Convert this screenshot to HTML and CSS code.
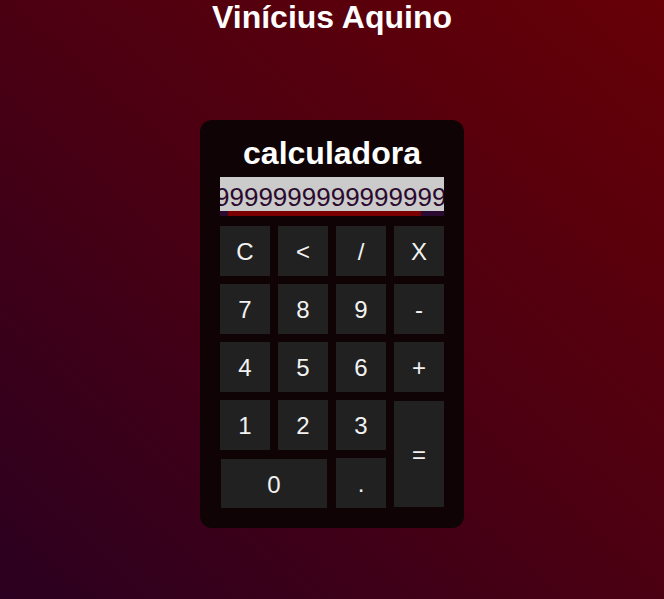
FILE: index.html
```html
<!DOCTYPE html>
<html lang="pt-br">
<head>
<meta charset="utf-8">
<title>Calculadora</title>
<link rel="stylesheet" href="styles.css">
</head>
<body>
<h1 class="author">Vinícius Aquino</h1>
<main class="calc">
  <h2 class="calc-title">calculadora</h2>
  <div class="display">
    <div class="display-text"><span class="digits">99999999999999999999</span></div>
    <div class="scroll-track"><div class="scroll-thumb"></div></div>
  </div>
  <div class="keys">
    <button class="key">C</button>
    <button class="key">&lt;</button>
    <button class="key">/</button>
    <button class="key">X</button>
    <button class="key">7</button>
    <button class="key">8</button>
    <button class="key">9</button>
    <button class="key">-</button>
    <button class="key">4</button>
    <button class="key">5</button>
    <button class="key">6</button>
    <button class="key">+</button>
    <button class="key">1</button>
    <button class="key">2</button>
    <button class="key">3</button>
    <button class="key key-equals">=</button>
    <button class="key key-zero">0</button>
    <button class="key key-dot">.</button>
  </div>
</main>
</body>
</html>
```
FILE: styles.css
```css
html, body {
  margin: 0;
  height: 100%;
}
body {
  background: linear-gradient(to top right, #2b0020 0%, #4b0012 50%, #660006 100%);
  font-family: "Liberation Sans", Arial, sans-serif;
  color: #ffffff;
  overflow: hidden;
}
.author {
  margin: 0;
  font-size: 32px;
  line-height: 34px;
  font-weight: bold;
  text-align: center;
}
.calc {
  width: 224px;
  margin: 86px auto 0;
  padding: 15px 20px 20px;
  background: #0f0305;
  border-radius: 12px;
}
.calc-title {
  margin: 0;
  font-size: 32px;
  line-height: 37px;
  font-weight: bold;
  text-align: center;
}
.display {
  margin-top: 5px;
  width: 224px;
  background: #cbcbcb;
}
.display-text {
  height: 34px;
  overflow: hidden;
  white-space: nowrap;
  font-size: 26px;
  line-height: 31px;
  padding-top: 5px;
  box-sizing: border-box;
  color: #2c0a2e;
}
.digits {
  display: inline-block;
  margin-left: -5px;
}
.scroll-track {
  height: 5px;
  background: #2a0a30;
  display: flex;
}
.scroll-thumb {
  margin-left: 8px;
  width: 193px;
  background: #7a0000;
}
.keys {
  margin-top: 10px;
  display: grid;
  grid-template-columns: repeat(4, 50px);
  grid-auto-rows: 50px;
  gap: 8px;
}
.key {
  margin: 0;
  padding: 2px 0 0;
  border: none;
  background: #212121;
  color: #f2f2f2;
  font-family: "Liberation Sans", Arial, sans-serif;
  font-size: 24px;
}
.key-equals {
  grid-column: 4;
  grid-row: 4 / span 2;
  margin: 1px 0;
}
.key-zero {
  grid-column: 1 / span 2;
  grid-row: 5;
  margin: 1px 1px 0;
}
.key-dot {
  grid-column: 3;
  grid-row: 5;
}
```
